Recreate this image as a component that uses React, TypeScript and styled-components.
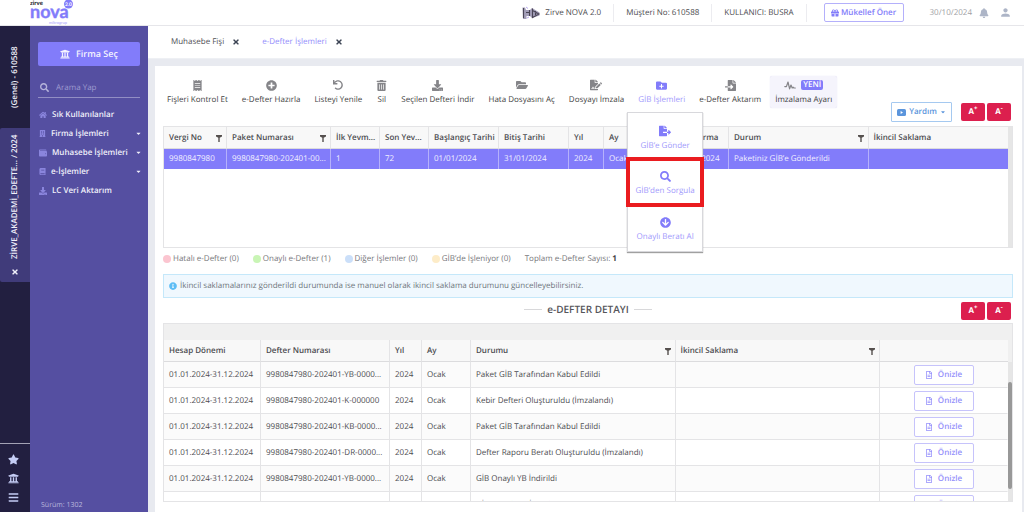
import React from 'react';
import styled, { createGlobalStyle, css } from 'styled-components';
import {
  FaArrowCircleDown, FaBars, FaBell, FaBook, FaBuilding, FaCaretDown, FaDownload, FaFileExport,
  FaFileImport, FaFileSignature, FaFolderOpen, FaFolderPlus, FaGift, FaHome, FaInfoCircle,
  FaPlusCircle, FaReceipt, FaRegFileAlt, FaSearch, FaStar, FaTimes, FaTrashAlt, FaUndo,
  FaUniversity, FaWallet,
} from 'react-icons/fa';
import { MdPerson } from 'react-icons/md';

const purple = '#827cfa';
const line = '#e4e4e6';

const GlobalStyle = createGlobalStyle`
  *, *::before, *::after { box-sizing: border-box; }
  body { margin: 0; background: #e8eaf0; text-rendering: geometricPrecision; }
  body, button, input, table {
    font-family: "Open Sans", "Noto Sans", sans-serif;
    font-size: 8px;
    line-height: 12px;
    color: #4c4c50;
  }
  button, input { text-rendering: inherit; }
  button { margin: 0; padding: 0; border: 0; background: none; cursor: pointer; }
  svg { display: block; flex: none; }
`;

const Page = styled.div`
  display: flex;
  flex-direction: column;
  height: 100vh;
  overflow: hidden;
`;

const Header = styled.header`
  display: flex;
  align-items: center;
  flex: none;
  height: 26px;
  background: #fff;
  border-bottom: 1px solid #e6e6ea;
  padding: 0 12px 0 30px;
`;

const Logo = styled.a`
  display: block;
  height: 26px;
  margin-right: auto;
`;

const HeaderItem = styled.div`
  display: flex;
  align-items: center;
  gap: 5px;
  height: 18px;
  padding: 0 12px;
  border-right: 1px solid #ececf0;
`;

const ReferButton = styled.button`
  display: flex;
  align-items: center;
  justify-content: center;
  gap: 2px;
  width: 80px;
  height: 19px;
  margin: 0 26px 0 17px;
  border: 1px solid #b4b0fb;
  border-radius: 2px;
  color: ${purple};
  font-weight: 600;
`;

const HeaderDate = styled.span`
  color: #a0a0a4;
  margin-right: 5px;
`;

const HeaderIcon = styled.button`
  color: #adb5c7;
  margin-left: 2px;
  & + & { margin-left: 10px; }
`;

const Body = styled.div`
  display: flex;
  flex: 1;
  min-height: 0;
`;

const Rail = styled.nav`
  display: flex;
  flex-direction: column;
  flex: none;
  width: 30px;
  background: #221f40;
`;

const RailTab = styled.button<{ $active?: boolean }>`
  display: flex;
  align-items: center;
  justify-content: center;
  gap: 9px;
  height: ${p => (p.$active ? 154 : 102)}px;
  writing-mode: vertical-rl;
  transform: rotate(180deg);
  color: #f1f0fa;
  font-weight: 600;
  white-space: nowrap;
  border-radius: 0 2px 2px 0;
  background: ${p => (p.$active ? '#403b7a' : 'transparent')};
`;

const RailTools = styled.div`
  display: flex;
  flex-direction: column;
  align-items: center;
  gap: 8px;
  margin-top: auto;
  padding: 10px 3px 9px 0;
  border-top: 1px solid #a3a2b5;
`;

const RailTool = styled.button`
  color: #c5cdf5;
`;

const Sidebar = styled.aside`
  display: flex;
  flex-direction: column;
  flex: none;
  width: 118px;
  padding: 16px 8px 0;
  background: #554fa1;
  color: #f0effa;
`;

const FirmButton = styled.button`
  display: flex;
  align-items: center;
  justify-content: center;
  gap: 6px;
  height: 24px;
  border-radius: 2px;
  background: ${purple};
  color: #f4f3ff;
  font-size: 9px;
  font-weight: 600;
`;

const SearchField = styled.label`
  display: flex;
  align-items: center;
  gap: 7px;
  height: 20px;
  margin: 12px 0 7px;
  padding: 0 2px;
  border-bottom: 1px solid #928ec4;
  color: #b5b3da;
`;

const SearchInput = styled.input`
  width: 80px;
  padding: 0;
  border: 0;
  outline: 0;
  background: transparent;
  color: #fff;
  &::placeholder { color: #9f9bd0; opacity: 1; }
`;

const NavLink = styled.a`
  display: flex;
  align-items: center;
  gap: 5px;
  height: 19px;
  padding-left: 1px;
  color: #f0effa;
  font-weight: 600;
  white-space: nowrap;
  text-decoration: none;
`;

const NavIcon = styled.span`
  display: flex;
  color: #8a85dd;
`;

const NavCaret = styled.span`
  display: flex;
  margin: 0 -2px 0 auto;
`;

const Version = styled.div`
  margin-top: auto;
  padding-left: 3px;
  font-size: 7px;
  color: #b9b7dc;
`;

const Main = styled.main`
  display: flex;
  flex-direction: column;
  flex: 1;
  min-width: 0;
`;

const TabBar = styled.div`
  display: flex;
  align-items: center;
  gap: 22px;
  flex: none;
  height: 33px;
  padding-left: 23px;
  background: #fff;
  border-bottom: 1px solid #eef0f4;
`;

const Tab = styled.div`
  display: flex;
  align-items: center;
  gap: 8px;
`;

const TabLabel = styled.button<{ $active?: boolean }>`
  color: ${p => (p.$active ? '#938dfb' : '#505055')};
  font-weight: 500;
`;

const TabClose = styled.button`
  color: #3c4454;
`;

const Card = styled.section`
  display: flex;
  flex-direction: column;
  flex: 1;
  min-height: 0;
  margin: 7px 2px 0 7px;
  padding: 10px 9px 10px 8px;
  background: #fff;
`;

const ActionRow = styled.div`
  display: flex;
  flex: none;
  height: 50px;
  justify-content: space-between;
`;

const Tools = styled.div`
  display: flex;
  gap: 4px;
  margin-left: -1px;
`;

const ToolSlot = styled.div`
  position: relative;
`;

const Tool = styled.button<{ $active?: boolean; $boxed?: boolean }>`
  display: flex;
  flex-direction: column;
  align-items: center;
  gap: 3px;
  height: 32px;
  padding: 3px 5px 0;
  white-space: nowrap;
  font-weight: 500;
  color: ${p => (p.$active ? '#9f9afc' : '#3f3f43')};
  ${p => p.$boxed && css`background: #f5f4fc; border-radius: 2px; box-shadow: 0 0 1px #d5d3ee;`}
`;

const ToolIcon = styled.span<{ $active?: boolean }>`
  display: flex;
  align-items: center;
  height: 12px;
  gap: 5px;
  color: ${p => (p.$active ? purple : '#858589')};
`;

const NewBadge = styled.span`
  padding: 0 2px;
  border-radius: 2px;
  background: ${purple};
  color: #fff;
  font-weight: 600;
  line-height: 10px;
`;

const Menu = styled.div`
  position: absolute;
  z-index: 2;
  top: 36px;
  left: -6px;
  width: 76px;
  background: #fff;
  border: 1px solid #d8d8dc;
  box-shadow: 0 1px 1px #a0a0a0;
`;

const MenuItem = styled.button<{ $marked?: boolean }>`
  display: flex;
  flex-direction: column;
  align-items: center;
  justify-content: center;
  gap: 3px;
  width: 100%;
  height: 46px;
  padding-top: 4px;
  color: #9f9afc;
  white-space: nowrap;
  svg { color: ${purple}; }
  ${p => p.$marked && css`outline: 4px solid #ea1c20; outline-offset: -2px;`}
`;

const SideActions = styled.div`
  display: flex;
  align-items: center;
  align-self: flex-end;
  gap: 2px;
  padding: 0 2px 4px 0;
`;

const HelpButton = styled.button`
  display: flex;
  align-items: center;
  justify-content: center;
  gap: 3px;
  width: 61px;
  height: 20px;
  margin-right: 7px;
  border: 1px solid #a5c9f0;
  border-radius: 1px;
  color: #5b95dc;
  font-weight: 600;
`;

const SizeButton = styled.button`
  width: 24px;
  height: 18px;
  border-radius: 2px;
  background: #dc1f4e;
  color: #fff;
  font-weight: 700;
  sup { font-size: 6px; line-height: 0; }
`;

const Grid = styled.div<{ $fill?: boolean }>`
  display: flex;
  flex: ${p => (p.$fill ? '1' : 'none')};
  height: ${p => (p.$fill ? 'auto' : '122px')};
  min-height: 0;
  border: 1px solid ${line};
`;

const GridBody = styled.div`
  flex: 1;
  min-width: 0;
  overflow: hidden;
`;

const GroupBand = styled.div`
  height: 16px;
  background: #f0f0f0;
`;

const Track = styled.div<{ $top: number }>`
  width: 4px;
  padding-top: ${p => p.$top}px;
  background: ${p => (p.$top ? 'linear-gradient(#f0f0f0 38px, #e6e6e6 38px)' : '#e6e6e6')};
`;

const Thumb = styled.div`
  height: 107px;
  border-radius: 2px;
  background: #989898;
`;

const Table = styled.table`
  width: 100%;
  table-layout: fixed;
  border-collapse: separate;
  border-spacing: 0;
`;

const Th = styled.th`
  height: 22px;
  padding: 0 5px;
  background: #f8f8f8;
  border-right: 1px solid ${line};
  border-bottom: 1px solid #dcdcde;
  text-align: left;
  font-weight: 600;
  white-space: nowrap;
  &:last-child { border-right: 0; }
`;

const ThInner = styled.div`
  display: flex;
  align-items: center;
  justify-content: space-between;
  svg { margin: 2px -1px 0 0; }
`;

const Td = styled.td`
  height: 26px;
  padding: 0 5px;
  border-right: 1px solid ${line};
  border-bottom: 1px solid ${line};
  white-space: nowrap;
  overflow: hidden;
  &:last-child { border-right-color: transparent; text-align: center; }
  tr:nth-child(odd) > & { background: #fbfbfb; }
`;

const PickedTd = styled.td`
  height: 20px;
  padding: 0 5px;
  background: ${purple};
  border-right: 1px solid #b5b1fb;
  color: #f2f1ff;
  white-space: nowrap;
  overflow: hidden;
  &:last-child { border-right: 0; }
`;

const PreviewButton = styled.button`
  display: inline-flex;
  align-items: center;
  justify-content: center;
  gap: 5px;
  width: 60px;
  height: 20px;
  border: 1px solid #c6c3fb;
  border-radius: 2px;
  background: #fff;
  color: #948ffb;
  font-weight: 600;
  vertical-align: middle;
`;

const Legend = styled.div`
  display: flex;
  align-items: center;
  flex: none;
  gap: 14px;
  height: 21px;
  color: #77777b;
`;

const LegendItem = styled.span`
  display: flex;
  align-items: center;
  gap: 2px;
  b { color: #444; }
`;

const Dot = styled.i<{ $color: string }>`
  width: 8px;
  height: 8px;
  border-radius: 50%;
  background: ${p => p.$color};
`;

const Notice = styled.div`
  display: flex;
  align-items: center;
  flex: none;
  gap: 3px;
  height: 24px;
  margin-top: 5px;
  padding-left: 5px;
  border: 1px solid #c5e8fa;
  background: #f0f8fe;
  color: #6e767c;
  svg { color: #5dbdf5; }
`;

const DetailHead = styled.div`
  display: grid;
  grid-template-columns: 1fr auto 1fr;
  align-items: center;
  flex: none;
  height: 25px;
`;

const DetailTitle = styled.h2`
  display: flex;
  align-items: center;
  grid-column: 2;
  gap: 5px;
  margin: 0;
  padding-bottom: 3px;
  font-size: 10px;
  line-height: 14px;
  font-weight: 600;
  color: #55555a;
  &::before, &::after { content: ""; width: 18px; height: 1px; background: #d8d8da; }
`;

const DetailActions = styled.div`
  display: flex;
  justify-content: flex-end;
  gap: 2px;
  padding-right: 2px;
`;

const FilterIcon = () => (
  <svg width="6" height="7" viewBox="0 0 6 7" fill="#55504e" aria-hidden="true">
    <path d="M0 0h6v1.500L3.700 2.800V7H2.300V2.800L0 1.500z" />
  </svg>
);

const WaveIcon = () => (
  <svg width="12" height="9" viewBox="0 0 12 9" fill="none" stroke="currentColor" strokeWidth="1.2" strokeLinejoin="round" strokeLinecap="round" aria-hidden="true">
    <path d="M.8 5.6h1.6L4 1l1.600 6.800L7 4l1.200 3 .9-.8.8.8h1.400" />
  </svg>
);

const VideoIcon = () => (
  <svg width="9" height="7" viewBox="0 0 9 7" aria-hidden="true">
    <rect width="9" height="7" rx="1.5" fill="currentColor" />
    <path d="M3.600 2v3l2.400-1.500z" fill="#fff" />
  </svg>
);

const RobotIcon = () => (
  <svg width="18" height="14" viewBox="0 0 18 14" aria-hidden="true">
    <path d="M.5 1.500h2.500l1 2.500h4L10 2l7.500 4.500v3L10 12 8 10H4.500v3H1z" fill="#a39eb8" />
    <path d="M1.500 2v10M4 6.500h3.500M7.500 4v6M10.500 2.500v9L17 8 10.500 4.500M13.500 5v4" stroke="#4a4556" strokeWidth="1.1" fill="none" />
    <path d="M4 1l2 1.500M5 12l2-1" stroke="#b9a8f0" strokeWidth="1" />
  </svg>
);

const NovaLogo = () => (
  <svg width="46" height="26" viewBox="0 0 46 26" role="img" aria-label="zirve nova 2.0 mikrogrup">
    <text x="0" y="5" fontFamily="Lato, sans-serif" fontSize="6" fontWeight="900" fill="#2b2a33">zirve</text>
    <text x="0" y="18" fontFamily="Lato, sans-serif" fontSize="18" fontWeight="700" fill={purple} stroke={purple} strokeWidth="0.4">nova</text>
    <circle cx="38.500" cy="4" r="4.500" fill={purple} />
    <text x="38.500" y="5.500" textAnchor="middle" fontFamily="Lato, sans-serif" fontSize="5" fontWeight="700" fill="#fff">2.0</text>
    <text x="19" y="24" fontFamily="Lato, sans-serif" fontSize="4" fill="#a5a0fb">mikrogrup</text>
  </svg>
);

const navItems = [
  { icon: <FaHome size={8} />, label: 'Sık Kullanılanlar', open: false },
  { icon: <FaBuilding size={7} />, label: 'Firma İşlemleri', open: true },
  { icon: <FaWallet size={8} />, label: 'Muhasebe İşlemleri', open: true },
  { icon: <FaBook size={7} />, label: 'e-İşlemler', open: true },
  { icon: <FaDownload size={8} />, label: 'LC Veri Aktarım', open: false },
];

const tools = [
  { icon: <FaReceipt size={11} />, label: 'Fişleri Kontrol Et' },
  { icon: <FaPlusCircle size={11} />, label: 'e-Defter Hazırla' },
  { icon: <FaUndo size={10} />, label: 'Listeyi Yenile' },
  { icon: <FaTrashAlt size={11} />, label: 'Sil' },
  { icon: <FaDownload size={11} />, label: 'Seçilen Defteri İndir' },
  { icon: <FaFolderOpen size={12} />, label: 'Hata Dosyasını Aç' },
  { icon: <FaFileSignature size={12} />, label: 'Dosyayı İmzala' },
  { icon: <FaFolderPlus size={11} />, label: 'GİB İşlemleri', menu: true },
  { icon: <FaFileImport size={11} />, label: 'e-Defter Aktarım' },
];

const packageCols: { head: string; width?: number; value: string; filter?: boolean }[] = [
  { head: 'Vergi No', width: 63, value: '9980847980', filter: true },
  { head: 'Paket Numarası', width: 104, value: '9980847980-202401-00...', filter: true },
  { head: 'İlk Yevm...', width: 49, value: '1' },
  { head: 'Son Yev...', width: 49, value: '72' },
  { head: 'Başlangıç Tarihi', width: 70, value: '01/01/2024' },
  { head: 'Bitiş Tarihi', width: 70, value: '31/01/2024' },
  { head: 'Yıl', width: 35, value: '2024' },
  { head: 'Ay', width: 68, value: 'Ocak' },
  { head: 'Oluşturma', width: 57, value: '30/10/2024' },
  { head: 'Durum', value: 'Paketiniz GİB’e Gönderildi', filter: true },
  { head: 'İkincil Saklama', value: '' },
];

const detailCols: { head: string; width?: number; filter?: boolean }[] = [
  { head: 'Hesap Dönemi', width: 97 },
  { head: 'Defter Numarası', width: 129 },
  { head: 'Yıl', width: 32 },
  { head: 'Ay', width: 49 },
  { head: 'Durumu', filter: true },
  { head: 'İkincil Saklama', filter: true },
  { head: '', width: 128 },
];

const detailRows = [
  ['9980847980-202401-YB-0000...', 'Paket GİB Tarafından Kabul Edildi'],
  ['9980847980-202401-K-000000', 'Kebir Defteri Oluşturuldu (İmzalandı)'],
  ['9980847980-202401-KB-0000...', 'Paket GİB Tarafından Kabul Edildi'],
  ['9980847980-202401-DR-0000...', 'Defter Raporu Beratı Oluşturuldu (İmzalandı)'],
  ['9980847980-202401-YB-0000...', 'GİB Onaylı YB İndirildi'],
  ['9980847980-202401-YB-0000...', 'GİB Onaylı KB İndirildi'],
];

const legend = [
  ['#fbc5d0', 'Hatalı e-Defter (0)'],
  ['#c9f5b5', 'Onaylı e-Defter (1)'],
  ['#cbdff9', 'Diğer İşlemler (0)'],
  ['#fdecc8', 'GİB’de İşleniyor (0)'],
];

const SizeButtons = () => (
  <>
    <SizeButton aria-label="Yazıyı büyüt">A<sup>+</sup></SizeButton>
    <SizeButton aria-label="Yazıyı küçült">A<sup>-</sup></SizeButton>
  </>
);

export default function App() {
  return (
    <Page>
      <GlobalStyle />
      <Header>
        <Logo href="#"><NovaLogo /></Logo>
        <HeaderItem><RobotIcon />Zirve NOVA 2.0</HeaderItem>
        <HeaderItem>Müşteri No: 610588</HeaderItem>
        <HeaderItem>KULLANICI: BUSRA</HeaderItem>
        <ReferButton><FaGift size={8} />Mükellef Öner</ReferButton>
        <HeaderDate>30/10/2024</HeaderDate>
        <HeaderIcon aria-label="Bildirimler"><FaBell size={10} /></HeaderIcon>
        <HeaderIcon aria-label="Hesap"><MdPerson size={13} /></HeaderIcon>
      </Header>
      <Body>
        <Rail>
          <RailTab>(Genel) - 610588</RailTab>
          <RailTab $active><FaTimes size={8} />ZİRVE_AKADEMİ_EDEFTE... / 2024</RailTab>
          <RailTools>
            <RailTool aria-label="Favoriler"><FaStar size={11} /></RailTool>
            <RailTool aria-label="Firmalar"><FaUniversity size={11} /></RailTool>
            <RailTool aria-label="Menü"><FaBars size={11} /></RailTool>
          </RailTools>
        </Rail>
        <Sidebar>
          <FirmButton><FaUniversity size={10} />Firma Seç</FirmButton>
          <SearchField>
            <FaSearch size={9} />
            <SearchInput placeholder="Arama Yap" aria-label="Arama Yap" />
          </SearchField>
          {navItems.map(n => (
            <NavLink href="#" key={n.label}>
              <NavIcon>{n.icon}</NavIcon>
              {n.label}
              {n.open && <NavCaret><FaCaretDown size={7} /></NavCaret>}
            </NavLink>
          ))}
          <Version>Sürüm: 1302</Version>
        </Sidebar>
        <Main>
          <TabBar>
            <Tab><TabLabel>Muhasebe Fişi</TabLabel><TabClose aria-label="Muhasebe Fişi kapat"><FaTimes size={8} /></TabClose></Tab>
            <Tab><TabLabel $active>e-Defter İşlemleri</TabLabel><TabClose aria-label="e-Defter İşlemleri kapat"><FaTimes size={8} /></TabClose></Tab>
          </TabBar>
          <Card>
            <ActionRow>
              <Tools>
                {tools.map(t => (
                  <ToolSlot key={t.label}>
                    <Tool $active={t.menu}>
                      <ToolIcon $active={t.menu}>{t.icon}</ToolIcon>
                      {t.label}
                    </Tool>
                    {t.menu && (
                      <Menu>
                        <MenuItem><FaFileExport size={12} />GİB’e Gönder</MenuItem>
                        <MenuItem $marked><FaSearch size={11} />GİB’den Sorgula</MenuItem>
                        <MenuItem><FaArrowCircleDown size={11} />Onaylı Beratı Al</MenuItem>
                      </Menu>
                    )}
                  </ToolSlot>
                ))}
                <Tool $boxed>
                  <ToolIcon><WaveIcon /><NewBadge>YENİ</NewBadge></ToolIcon>
                  İmzalama Ayarı
                </Tool>
              </Tools>
              <SideActions>
                <HelpButton><VideoIcon />Yardım<FaCaretDown size={6} /></HelpButton>
                <SizeButtons />
              </SideActions>
            </ActionRow>
            <Grid>
              <GridBody>
                <Table>
                  <colgroup>{packageCols.map(c => <col key={c.head} width={c.width} />)}</colgroup>
                  <thead>
                    <tr>{packageCols.map(c => <Th key={c.head}><ThInner>{c.head}{c.filter && <FilterIcon />}</ThInner></Th>)}</tr>
                  </thead>
                  <tbody>
                    <tr>{packageCols.map(c => <PickedTd key={c.head}>{c.value}</PickedTd>)}</tr>
                  </tbody>
                </Table>
              </GridBody>
              <Track $top={0} />
            </Grid>
            <Legend>
              {legend.map(([color, label]) => <LegendItem key={label}><Dot $color={color} />{label}</LegendItem>)}
              <LegendItem>Toplam e-Defter Sayısı: <b>1</b></LegendItem>
            </Legend>
            <Notice>
              <FaInfoCircle size={8} />
              İkincil saklamalarınız gönderildi durumunda ise manuel olarak ikincil saklama durumunu güncelleyebilirsiniz.
            </Notice>
            <DetailHead>
              <DetailTitle>e-DEFTER DETAYI</DetailTitle>
              <DetailActions><SizeButtons /></DetailActions>
            </DetailHead>
            <Grid $fill>
              <GridBody>
                <GroupBand />
                <Table>
                  <colgroup>{detailCols.map(c => <col key={c.head} width={c.width} />)}</colgroup>
                  <thead>
                    <tr>{detailCols.map(c => <Th key={c.head}><ThInner>{c.head}{c.filter && <FilterIcon />}</ThInner></Th>)}</tr>
                  </thead>
                  <tbody>
                    {detailRows.map(([no, status], i) => (
                      <tr key={i}>
                        <Td>01.01.2024-31.12.2024</Td>
                        <Td>{no}</Td>
                        <Td>2024</Td>
                        <Td>Ocak</Td>
                        <Td>{status}</Td>
                        <Td />
                        <Td><PreviewButton><FaRegFileAlt size={8} />Önizle</PreviewButton></Td>
                      </tr>
                    ))}
                  </tbody>
                </Table>
              </GridBody>
              <Track $top={58}><Thumb /></Track>
            </Grid>
          </Card>
        </Main>
      </Body>
    </Page>
  );
}
